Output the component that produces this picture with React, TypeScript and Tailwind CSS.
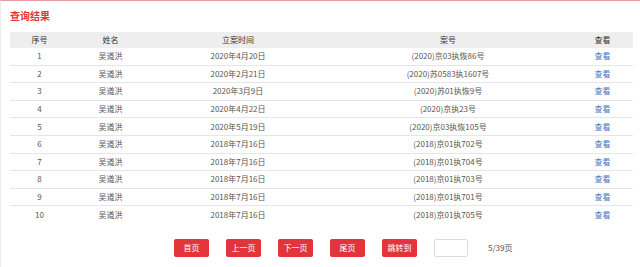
import React from 'react';

const rows = [
  { id: 1, name: '吴道洪', date: '2020年4月20日', no: '(2020)京03执恢86号' },
  { id: 2, name: '吴道洪', date: '2020年2月21日', no: '(2020)苏0583执1607号' },
  { id: 3, name: '吴道洪', date: '2020年3月9日', no: '(2020)苏01执恢9号' },
  { id: 4, name: '吴道洪', date: '2020年4月22日', no: '(2020)京执23号' },
  { id: 5, name: '吴道洪', date: '2020年5月19日', no: '(2020)京03执恢105号' },
  { id: 6, name: '吴道洪', date: '2018年7月16日', no: '(2018)京01执702号' },
  { id: 7, name: '吴道洪', date: '2018年7月16日', no: '(2018)京01执704号' },
  { id: 8, name: '吴道洪', date: '2018年7月16日', no: '(2018)京01执703号' },
  { id: 9, name: '吴道洪', date: '2018年7月16日', no: '(2018)京01执701号' },
  { id: 10, name: '吴道洪', date: '2018年7月16日', no: '(2018)京01执705号' },
];

const cols = 'grid grid-cols-[59px_83px_172px_248px_61px]';

export default function App() {
  return (
    <div
      className="w-[640px] h-[267px] bg-white border-t border-[#e79a9a] border-l border-l-[#ececec] overflow-hidden"
      style={{ fontFamily: '"Noto Sans CJK SC", "Noto Sans", sans-serif' }}
    >
      <h2 className="pl-[9px] pt-[8px] h-[31px] text-[10px] leading-[14px] font-bold text-[#e2353b]">查询结果</h2>

      <div className="ml-[9px] w-[623px] text-[8px]">
        <div className={`${cols} h-[16px] items-center bg-[#eeeeee] text-[#333] text-center`}>
          <span>序号</span>
          <span>姓名</span>
          <span>立案时间</span>
          <span>案号</span>
          <span>查看</span>
        </div>
        {rows.map((r, i) => (
          <div
            key={r.id}
            className={`${cols} h-[17.6px] items-center text-center text-[#555] ${i < rows.length - 1 ? 'border-b border-[#e6e6e6]' : ''}`}
          >
            <span>{r.id}</span>
            <span>{r.name}</span>
            <span>{r.date}</span>
            <span>{r.no}</span>
            <span className="text-[#3f78c0]">查看</span>
          </div>
        ))}
      </div>

      <div className="flex items-center gap-[17px] pl-[173px] mt-[15px] text-[8px]">
        {['首页', '上一页', '下一页', '尾页', '跳转到'].map((t) => (
          <button key={t} className="w-[35px] h-[18px] rounded-[2px] bg-[#e2353b] text-white leading-none">
            {t}
          </button>
        ))}
        <input className="w-[34px] h-[18px] border border-[#dddddd] rounded-[2px] bg-white outline-none" />
        <span className="ml-[3px] text-[#555]">5/39页</span>
      </div>
    </div>
  );
}
